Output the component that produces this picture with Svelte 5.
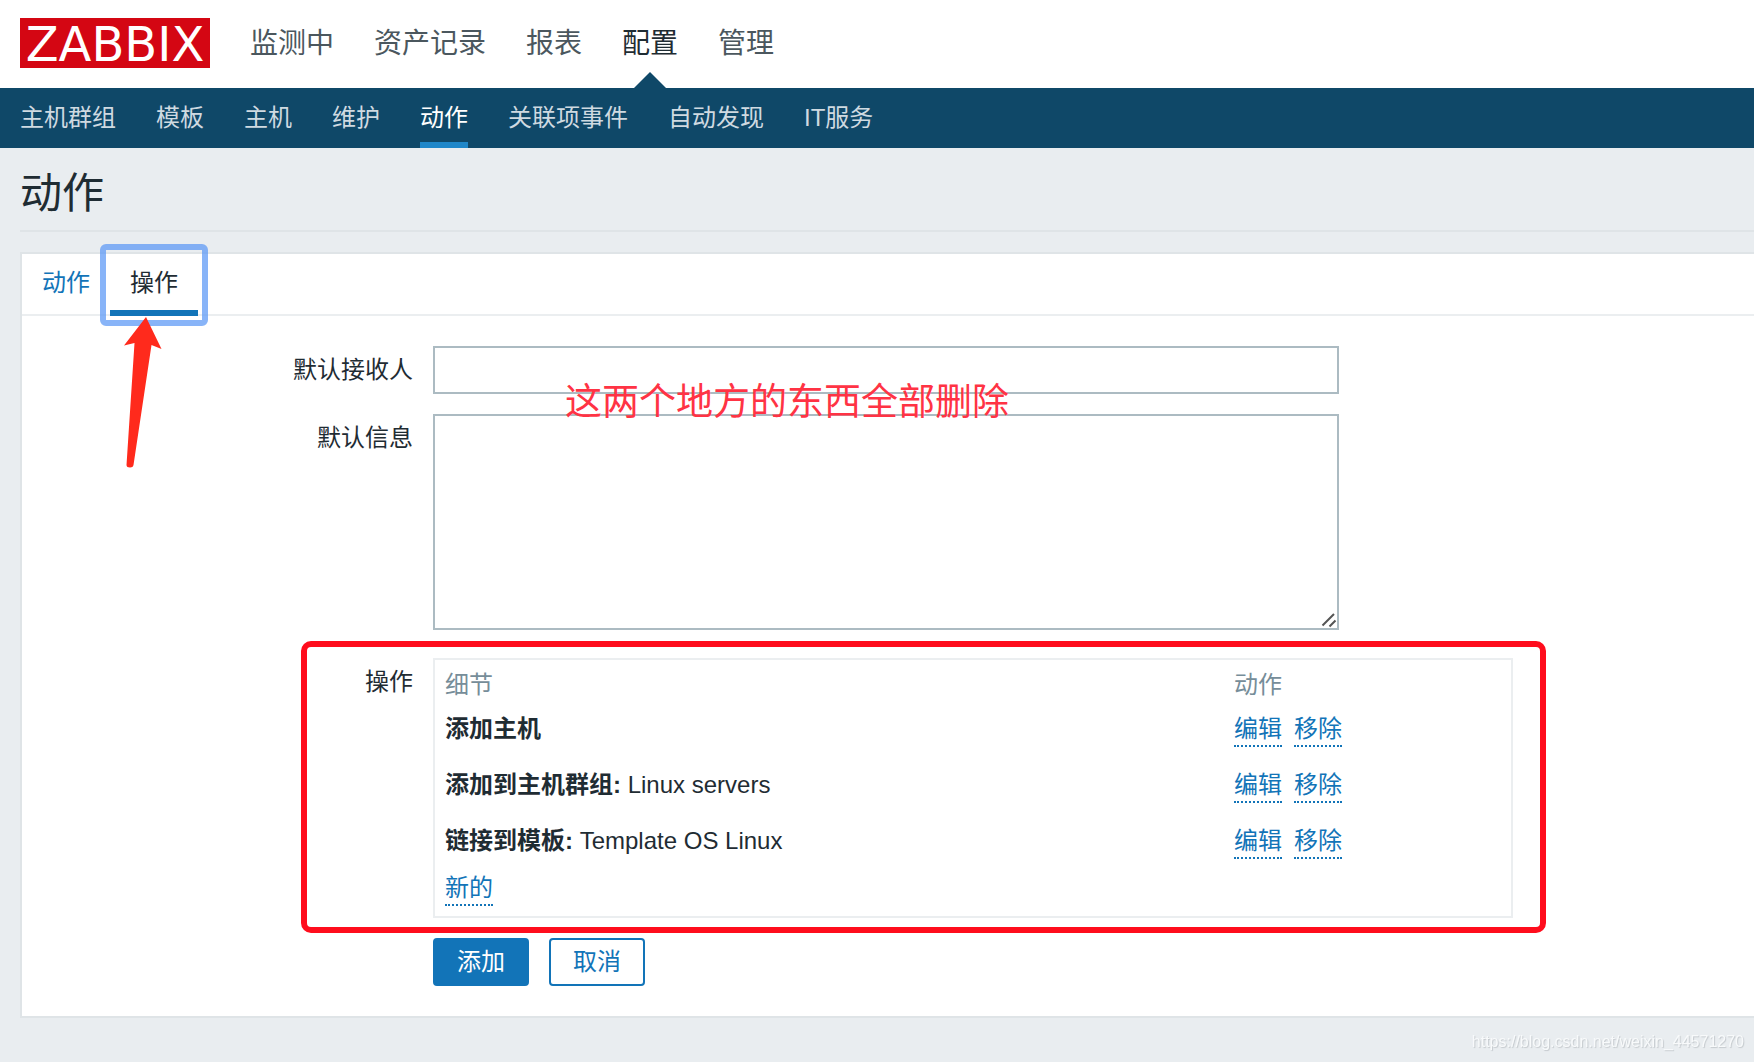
<script lang="ts">
	const mainMenu = ['监测中', '资产记录', '报表', '配置', '管理'];
	const subMenu = ['主机群组', '模板', '主机', '维护', '动作', '关联项事件', '自动发现', 'IT服务'];
	const tabs = ['动作', '操作'];

	const operations = [
		{ label: '添加主机', value: '' },
		{ label: '添加到主机群组:', value: 'Linux servers' },
		{ label: '链接到模板:', value: 'Template OS Linux' }
	];

	let activeMain = $state('配置');
	let activeSub = $state('动作');
	let activeTab = $state('操作');
	let recipient = $state('');
	let message = $state('');
</script>

<header class="top">
	<a class="logo" href="#home">ZABBIX</a>
	<nav class="main-nav">
		{#each mainMenu as item}
			<a href="#main" class:selected={item === activeMain} onclick={() => (activeMain = item)}>{item}</a>
		{/each}
	</nav>
</header>

<nav class="sub-nav">
	{#each subMenu as item}
		<a href="#sub" class:selected={item === activeSub} onclick={() => (activeSub = item)}>{item}</a>
	{/each}
</nav>

<main>
	<h1>动作</h1>

	<div class="panel">
		<div class="tabs" role="tablist">
			{#each tabs as tab}
				<button
					type="button"
					role="tab"
					class="tab"
					class:selected={tab === activeTab}
					aria-selected={tab === activeTab}
					onclick={() => (activeTab = tab)}
				>
					{tab}
				</button>
			{/each}
			<svg class="arrow" width="40" height="152" viewBox="0 0 40 152" aria-hidden="true">
				<path d="M22 1 L37.5 33 L27.5 29 L9.5 149 Q9 151.5 6 151.5 Q2.5 151.5 2.5 149 L10.5 27 L0 29.5 Z" />
			</svg>
		</div>

		<form onsubmit={(e) => e.preventDefault()}>
			<div class="row">
				<label for="recipient">默认接收人</label>
				<div class="field">
					<input id="recipient" type="text" bind:value={recipient} />
					<span class="note">这两个地方的东西全部删除</span>
				</div>
			</div>

			<div class="row message">
				<label for="message">默认信息</label>
				<div class="field">
					<textarea id="message" bind:value={message}></textarea>
					<svg class="grip" width="16" height="16" viewBox="0 0 16 16" aria-hidden="true">
						<path d="M1.5 13.5 L13 2 M8.5 14.5 L14.5 8.5" />
					</svg>
				</div>
			</div>

			<div class="row marked">
				<span class="label">操作</span>
				<div class="table-frame">
					<table>
						<thead>
							<tr>
								<th>细节</th>
								<th class="actions">动作</th>
							</tr>
						</thead>
						<tbody>
							{#each operations as op}
								<tr>
									<td><b>{op.label}</b> {op.value}</td>
									<td class="actions">
										<div class="links">
											<button type="button" class="link">编辑</button>
											<button type="button" class="link">移除</button>
										</div>
									</td>
								</tr>
							{/each}
						</tbody>
						<tfoot>
							<tr>
								<td colspan="2">
									<div class="links"><button type="button" class="link">新的</button></div>
								</td>
							</tr>
						</tfoot>
					</table>
				</div>
			</div>

			<div class="row">
				<div class="buttons">
					<button type="submit" class="btn">添加</button>
					<button type="button" class="btn alt">取消</button>
				</div>
			</div>
		</form>
	</div>
</main>

<div class="watermark">https://blog.csdn.net/weixin_44571270</div>

<style>
	:global(body) {
		background: #e9edf0;
		color: #1f2c33;
		font-family: 'Liberation Sans', 'Noto Sans CJK SC', sans-serif;
		font-size: 24px;
		line-height: 36px;
	}

	a {
		text-decoration: none;
	}

	button,
	input,
	textarea {
		font: inherit;
		box-sizing: border-box;
	}

	button {
		padding: 0;
		border: 0;
		background: none;
		cursor: pointer;
	}

	.top {
		display: flex;
		align-items: flex-start;
		gap: 40px;
		padding: 0 20px;
		height: 88px;
		background: #fff;
	}

	.logo {
		width: 190px;
		height: 50px;
		margin-top: 18px;
		background: #d40613;
		color: #fff;
		font-family: 'DejaVu Sans', sans-serif;
		font-size: 48px;
		line-height: 52px;
		text-align: center;
	}

	.main-nav {
		display: flex;
		align-self: stretch;
		gap: 40px;
		font-size: 28px;
		line-height: 88px;
	}

	.main-nav a {
		position: relative;
		color: #4b575e;
	}

	.main-nav a.selected {
		color: #1f2c33;
	}

	.main-nav a.selected::after {
		content: '';
		position: absolute;
		bottom: 0;
		left: calc(50% - 16px);
		border: 16px solid transparent;
		border-top: 0;
		border-bottom-color: #0f4868;
	}

	.sub-nav {
		display: flex;
		gap: 40px;
		padding: 0 20px;
		height: 60px;
		background: #0f4868;
		line-height: 60px;
	}

	.sub-nav a {
		box-sizing: border-box;
		height: 60px;
		color: #cfdae1;
	}

	.sub-nav a.selected {
		border-bottom: 6px solid #1f87c9;
		color: #fff;
	}

	main {
		padding: 0 0 20px 20px;
	}

	h1 {
		margin: 0 0 20px;
		border-bottom: 2px solid #dfe4e7;
		font-size: 42px;
		font-weight: normal;
		line-height: 92px;
		height: 82px;
	}

	.panel {
		border: 2px solid #dfe4e7;
		border-right: 0;
		background: #fff;
	}

	.tabs {
		position: relative;
		display: flex;
		border-bottom: 2px solid #ebeef0;
	}

	.tab {
		position: relative;
		height: 62px;
		margin-bottom: -2px;
		padding: 0 20px 6px;
		color: #1274b8;
		line-height: 56px;
	}

	.tab.selected {
		padding: 2px 20px 0;
		border-bottom: 6px solid #1274b8;
		color: #1f2c33;
		line-height: 54px;
	}

	.tab:not(.selected) {
		padding: 2px 20px 6px;
		line-height: 54px;
	}

	.tab.selected::after {
		content: '';
		position: absolute;
		inset: -10px -10px -16px;
		border: 6px solid rgba(92, 152, 245, 0.73);
		border-radius: 6px;
	}

	.arrow {
		position: absolute;
		top: 62px;
		left: 102px;
		fill: #ff2a1c;
	}

	form {
		display: flex;
		flex-direction: column;
		gap: 20px;
		padding: 30px 0;
	}

	.row {
		display: grid;
		grid-template-columns: 391px minmax(0, 1fr);
		column-gap: 20px;
	}

	.row label,
	.row .label {
		padding-top: 6px;
		text-align: right;
	}

	.message {
		padding-bottom: 8px;
	}

	.field {
		position: relative;
		max-width: 906px;
	}

	input,
	textarea {
		display: block;
		width: 100%;
		padding: 4px 10px;
		border: 2px solid #acbbc2;
		border-radius: 0;
		background: #fff;
		color: inherit;
		outline: 0;
	}

	input {
		height: 48px;
	}

	textarea {
		height: 216px;
		resize: none;
	}

	.note {
		position: absolute;
		top: 32px;
		left: 132px;
		z-index: 1;
		color: #ff3344;
		font-size: 37px;
		line-height: 50px;
		white-space: nowrap;
		pointer-events: none;
	}

	.message .field {
		z-index: 0;
	}

	.grip {
		position: absolute;
		right: 2px;
		bottom: 2px;
		fill: none;
		stroke: #555;
		stroke-width: 2;
		pointer-events: none;
	}

	.marked {
		position: relative;
	}

	.marked::after {
		content: '';
		position: absolute;
		top: -17px;
		bottom: -15px;
		left: 279px;
		box-sizing: border-box;
		width: 1245px;
		border: 6px solid #ff0d1d;
		border-radius: 10px;
		pointer-events: none;
	}

	.table-frame {
		box-sizing: border-box;
		max-width: 1080px;
		padding: 9px 10px;
		border: 2px solid #ebeef0;
	}

	table {
		width: 100%;
		border-collapse: collapse;
	}

	th,
	td {
		height: 56px;
		padding: 0;
		text-align: left;
	}

	th {
		height: 32px;
		color: #768d99;
		font-weight: normal;
		line-height: 32px;
	}

	tfoot td {
		height: 38px;
	}

	.actions {
		width: 267px;
	}

	.links {
		display: flex;
		gap: 12px;
	}

	.link {
		padding-top: 2px;
		border-bottom: 2px dotted #1274b8;
		color: #1274b8;
		line-height: 32px;
	}

	.buttons {
		display: flex;
		grid-column: 2;
		gap: 20px;
	}

	.btn {
		width: 96px;
		height: 48px;
		border: 2px solid #1274b8;
		border-radius: 4px;
		background: #1274b8;
		color: #fff;
		line-height: 44px;
	}

	.btn.alt {
		background: #fff;
		color: #1274b8;
	}

	.watermark {
		position: fixed;
		right: 10px;
		bottom: 8px;
		color: #f8fafb;
		font-size: 16px;
		line-height: 24px;
		text-shadow: 1px 1px 1px #c4c9cd;
	}
</style>
